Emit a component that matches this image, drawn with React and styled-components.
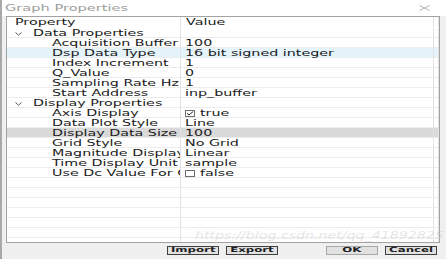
import React from "react";
import styled, { createGlobalStyle } from "styled-components";

const GlobalStyle = createGlobalStyle`
  html, body {
    margin: 0;
    padding: 0;
    background: #ffffff;
  }
  body {
    font-family: "DejaVu Sans", "Liberation Sans", sans-serif;
    color: #1b1b1b;
  }
`;

const Window = styled.div`
  position: relative;
  width: 446px;
  height: 259px;
  box-sizing: border-box;
  display: flex;
  flex-direction: column;
  background: #f0f0f0;
  border-left: 2px solid #a9a9a9;
  overflow: hidden;
`;

const TitleBar = styled.div`
  height: 16px;
  flex: none;
  display: flex;
  align-items: center;
  justify-content: space-between;
  padding: 0 16px 0 3px;
  background: #ffffff;
`;

const Stretched = styled.span`
  display: inline-block;
  white-space: nowrap;
  transform: scaleX(1.68);
  transform-origin: left center;
`;

const TitleText = styled(Stretched)`
  font-size: 8.7px;
  line-height: 16px;
  color: #9c9c9c;
`;

const Body = styled.div`
  flex: none;
  padding: 0 6px 0 4px;
`;

const Grid = styled.div`
  height: 227px;
  box-sizing: border-box;
  border: 1px solid #a3a3a3;
  background: #ffffff;
  overflow: hidden;
`;

const Row = styled.div`
  display: grid;
  grid-template-columns: 174px 253px 5px;
  height: ${(p) => (p.$header ? 11 : 10)}px;
  box-sizing: border-box;
  border-bottom: 1px solid ${(p) => (p.$header ? "transparent" : "#ececec")};
  background: ${(p) =>
    p.$state === "hover" ? "#e5f3fb" : p.$state === "selected" ? "#d9d9d9" : "transparent"};
`;

const Cell = styled.div`
  display: flex;
  align-items: center;
  gap: ${(p) => p.$gap || 0}px;
  padding-left: ${(p) => p.$indent || 0}px;
  padding-top: 1px;
  border-right: 1px solid #e3e3e3;
  overflow-x: clip;
  min-width: 0;
`;

const CellText = styled(Stretched)`
  font-size: 8.5px;
  line-height: 9px;
`;

const ButtonBar = styled.div`
  flex: none;
  display: flex;
  justify-content: flex-end;
  gap: 48px;
  padding: 3px 9px 0 0;
`;

const ButtonGroup = styled.div`
  display: flex;
  gap: 7px;
`;

const Button = styled.button`
  width: 52px;
  height: 9px;
  padding: 0;
  margin: 0;
  box-sizing: border-box;
  display: flex;
  align-items: center;
  justify-content: center;
  background: #e1e1e1;
  border: 1px solid ${(p) => (p.$soft ? "#a8a8a8" : "#3f3f3f")};
  overflow: visible;
  font-family: "DejaVu Sans", sans-serif;
`;

const ButtonText = styled(Stretched)`
  font-size: 7px;
  line-height: 7px;
  font-weight: 700;
  color: #1e1e1e;
  transform-origin: center center;
`;

const Watermark = styled.div`
  position: absolute;
  left: 193px;
  top: 229px;
  font-family: "DejaVu Sans", sans-serif;
  font-size: 10.5px;
  font-style: italic;
  white-space: nowrap;
  color: rgba(205, 205, 205, 0.5);
  transform: scaleX(1.35);
  transform-origin: left center;
  pointer-events: none;
`;

const Chevron = () => (
  <svg width="7" height="4" viewBox="0 0 7 4">
    <polyline points="0.5,0.5 3.5,3.2 6.5,0.5" fill="none" stroke="#5a5a5a" strokeWidth="1" />
  </svg>
);

const CheckBox = ({ checked }) => (
  <svg width="10" height="7" viewBox="0 0 10 7">
    <rect x="0.5" y="0.5" width="9" height="6" fill="#ffffff" stroke="#6d6d6d" strokeWidth="1" />
    {checked && (
      <polyline points="2,3.4 4,5 8,1.6" fill="none" stroke="#222" strokeWidth="1" />
    )}
  </svg>
);

const CloseIcon = () => (
  <svg width="11" height="6" viewBox="0 0 11 6">
    <path d="M0.5 0.5 L10.5 5.5 M10.5 0.5 L0.5 5.5" stroke="#b4b4b4" strokeWidth="1" fill="none" />
  </svg>
);

const rows = [
  { group: true, name: "Data Properties" },
  { name: "Acquisition Buffer", value: "100" },
  { name: "Dsp Data Type", value: "16 bit signed integer", state: "hover" },
  { name: "Index Increment", value: "1" },
  { name: "Q_Value", value: "0" },
  { name: "Sampling Rate Hz", value: "1" },
  { name: "Start Address", value: "inp_buffer" },
  { group: true, name: "Display Properties" },
  { name: "Axis Display", value: "true", check: true },
  { name: "Data Plot Style", value: "Line" },
  { name: "Display Data Size", value: "100", state: "selected" },
  { name: "Grid Style", value: "No Grid" },
  { name: "Magnitude Display", value: "Linear" },
  { name: "Time Display Unit", value: "sample" },
  { name: "Use Dc Value For Graph", value: "false", check: false },
];

export default function App() {
  return (
    <>
      <GlobalStyle />
      <Window>
        <TitleBar>
          <TitleText>Graph Properties</TitleText>
          <CloseIcon />
        </TitleBar>
        <Body>
          <Grid>
            <Row $header>
              <Cell $indent={8}>
                <CellText>Property</CellText>
              </Cell>
              <Cell $indent={5}>
                <CellText>Value</CellText>
              </Cell>
              <Cell />
            </Row>
            {rows.map((r) => (
              <Row key={r.name} $state={r.state}>
                {r.group ? (
                  <Cell $indent={8} $gap={11}>
                    <Chevron />
                    <CellText>{r.name}</CellText>
                  </Cell>
                ) : (
                  <Cell $indent={45}>
                    <CellText>{r.name}</CellText>
                  </Cell>
                )}
                <Cell $indent={4} $gap={5}>
                  {r.check !== undefined && <CheckBox checked={r.check} />}
                  {r.value && <CellText>{r.value}</CellText>}
                </Cell>
                <Cell />
              </Row>
            ))}
            {Array.from({ length: 7 }).map((_, i) => (
              <Row key={"empty" + i}>
                <Cell />
                <Cell />
                <Cell />
              </Row>
            ))}
          </Grid>
        </Body>
        <ButtonBar>
          <ButtonGroup>
            <Button>
              <ButtonText>Import</ButtonText>
            </Button>
            <Button>
              <ButtonText>Export</ButtonText>
            </Button>
          </ButtonGroup>
          <ButtonGroup>
            <Button $soft>
              <ButtonText>OK</ButtonText>
            </Button>
            <Button>
              <ButtonText>Cancel</ButtonText>
            </Button>
          </ButtonGroup>
        </ButtonBar>
        <Watermark>https://blog.csdn.net/qq_41892825</Watermark>
      </Window>
    </>
  );
}
